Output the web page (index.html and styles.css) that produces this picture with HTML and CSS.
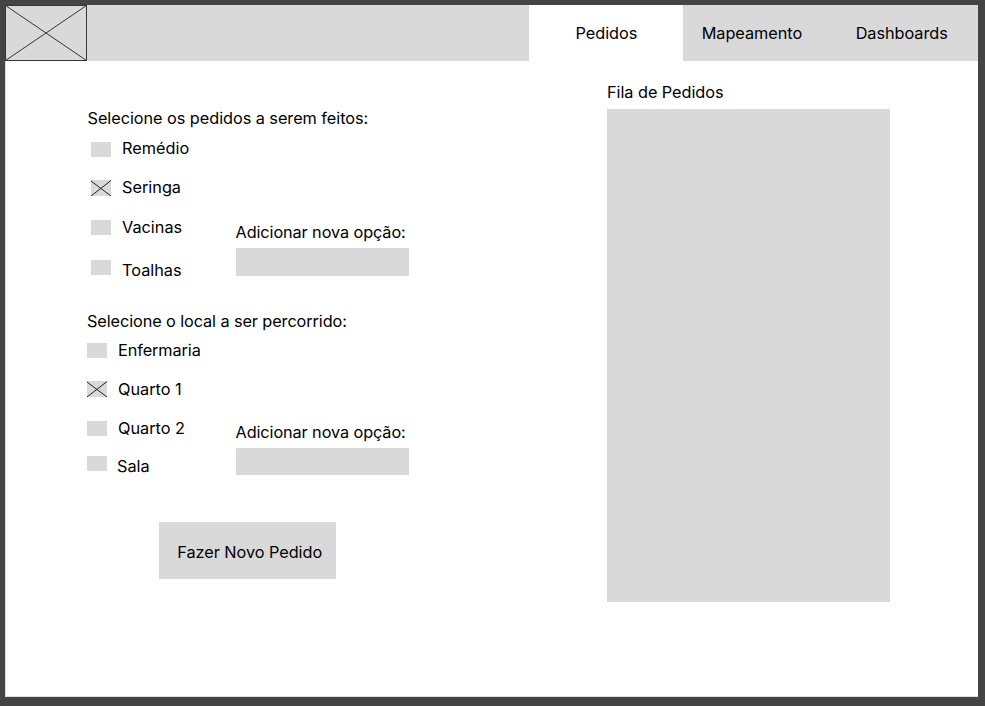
FILE: index.html
```html
<!DOCTYPE html>
<html lang="pt-BR">
<head>
<meta charset="utf-8">
<title>Pedidos</title>
<link rel="stylesheet" href="styles.css">
</head>
<body>
<div class="frame">
  <header class="topbar">
    <svg class="logo" viewBox="0 0 82 56"><path d="M.5 .5H81.500V55.500H.5ZM.5 .5L81.500 55.500M.5 55.500L81.500 .5"/></svg>
    <nav class="tabs">
      <a class="tab active">Pedidos</a>
      <a class="tab">Mapeamento</a>
      <a class="tab last">Dashboards</a>
    </nav>
  </header>
  <main class="content">
    <section class="form">
      <div class="group orders">
        <h2 class="heading">Selecione os pedidos a serem feitos:</h2>
        <div class="columns">
          <ul class="options">
            <li class="option"><span class="box"></span><span>Remédio</span></li>
            <li class="option"><svg class="box" viewBox="0 0 20 16"><path d="M0 1L20 16M0 16L20 .5"/></svg><span>Seringa</span></li>
            <li class="option"><span class="box"></span><span>Vacinas</span></li>
            <li class="option"><span class="box"></span><span>Toalhas</span></li>
          </ul>
          <label class="add"><span>Adicionar nova opção:</span><input class="field" type="text"></label>
        </div>
      </div>
      <div class="group places">
        <h2 class="heading">Selecione o local a ser percorrido:</h2>
        <div class="columns">
          <ul class="options">
            <li class="option"><span class="box"></span><span>Enfermaria</span></li>
            <li class="option"><svg class="box" viewBox="0 0 20 16"><path d="M0 1L20 16M0 16L20 .5"/></svg><span>Quarto 1</span></li>
            <li class="option"><span class="box"></span><span>Quarto 2</span></li>
            <li class="option"><span class="box"></span><span>Sala</span></li>
          </ul>
          <label class="add"><span>Adicionar nova opção:</span><input class="field" type="text"></label>
        </div>
      </div>
      <button class="submit">Fazer Novo Pedido</button>
    </section>
    <section class="queue">
      <h2 class="heading">Fila de Pedidos</h2>
      <div class="queue-list"></div>
    </section>
  </main>
</div>
</body>
</html>
```
FILE: styles.css
```css
* { box-sizing: border-box; }
body {
  margin: 0;
  height: 706px;
  padding: 5px 7px 9px 5px;
  background: #444;
  color: #000;
  font: 400 16.3px/20px Inter, sans-serif;
  overflow: hidden;
}
.frame {
  height: 692px;
  background: #fff;
  box-shadow: inset 1px -1px 0 #ddd;
}
.topbar {
  display: flex;
  justify-content: space-between;
  height: 56px;
  background: #d9d9d9;
}
.logo { width: 82px; height: 56px; }
.logo path, .box path { fill: none; stroke: #222; stroke-width: 1; }
.logo path { stroke-width: 0.9; }
.tabs { display: flex; width: 448.6px; }
.tab {
  width: 154px;
  padding-top: 18px;
  text-align: center;
  letter-spacing: -0.05px;
}
.tab.active { background: #fff; }
.tab:nth-child(2) { width: 137px; }
.tab.last { width: 157.6px; padding-left: 5px; }
.content { display: flex; }
.form { width: 520px; padding: 47px 0 0 82px; }
.heading { margin: 0; font: inherit; letter-spacing: -0.05px; white-space: nowrap; }
.places .heading { letter-spacing: -0.1px; }
.orders .heading { padding-left: 0.5px; }
.columns { display: flex; }
.options {
  width: 148.5px;
  margin: 0;
  padding: 10px 0 0;
  list-style: none;
  flex: none;
}
.orders .options { padding-left: 4px; }
.option {
  display: flex;
  align-items: flex-start;
  gap: 11px;
  height: 20px;
  margin-bottom: 20px;
}
.box {
  flex: none;
  width: 20px;
  height: 15px;
  margin-top: 3.5px;
  background: #d9d9d9;
}
svg.box { height: 16px; margin-top: 3px; }
.orders .option:nth-child(1) { margin-bottom: 19px; }
.orders .option:nth-child(3) { margin-bottom: 23px; }
.orders .option:nth-child(3) .box { margin-top: 3px; }
.orders .option:nth-child(4) { margin-bottom: 0; }
.orders .option:nth-child(4) .box { margin-top: 0; }
.places { margin-top: 31px; }
.places .options { padding-top: 9px; }
.places .option { margin-bottom: 19px; }
.places .option .box { margin-top: 3px; }
.places .option:nth-child(1) { letter-spacing: -0.1px; }
.places .option:nth-child(2) .box { margin-top: 2px; }
.places .option:nth-child(3) { margin-bottom: 18px; }
.places .option:nth-child(4) { margin-bottom: 0; gap: 10px; }
.places .option:nth-child(4) .box { margin-top: 0; }
.add {
  display: flex;
  flex-direction: column;
  gap: 6px;
  padding-top: 94px;
  letter-spacing: -0.1px;
  white-space: nowrap;
}
.places .add { padding-top: 91px; }
.field {
  width: 173px;
  height: 27.5px;
  padding: 0 8px;
  border: 0;
  background: #d9d9d9;
  font: inherit;
}
.places .field { height: 27px; }
.submit {
  display: block;
  width: 176.5px;
  height: 57px;
  margin: 46px 0 0 72px;
  padding: 2px 0 0 5px;
  border: 0;
  background: #d9d9d9;
  color: inherit;
  font: inherit;
  letter-spacing: -0.05px;
}
.queue { width: 283px; margin: 21px 0 0 82px; }
.queue-list {
  width: 282.6px;
  height: 493px;
  margin-top: 6.5px;
  background: #d9d9d9;
}
```
